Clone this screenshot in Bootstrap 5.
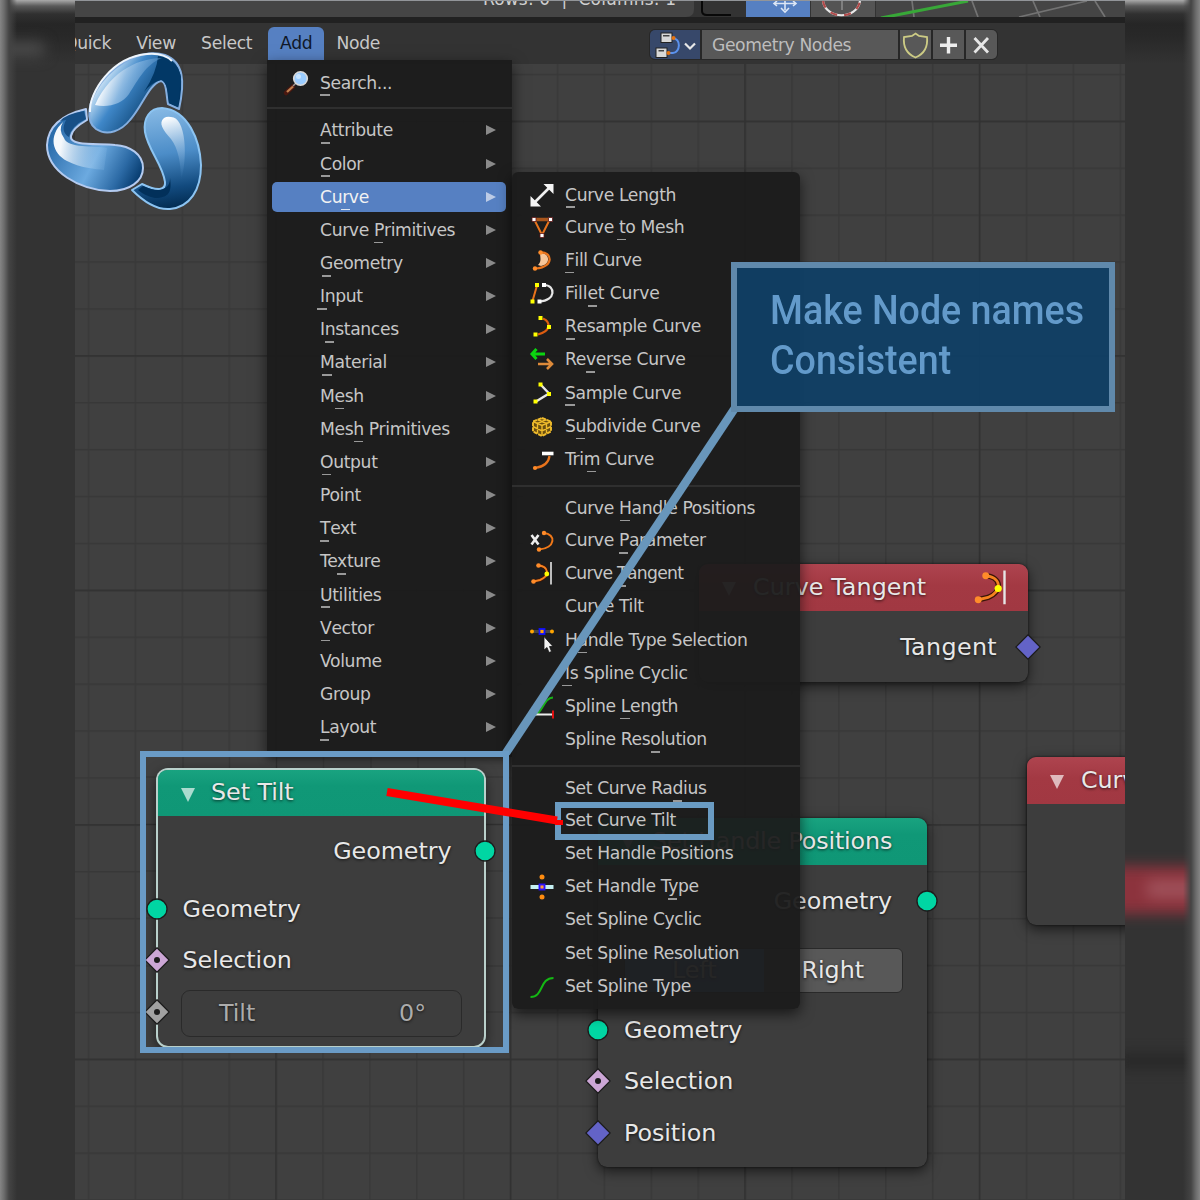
<!DOCTYPE html>
<html lang="en">
<head>
<meta charset="utf-8">
<title>Geometry Nodes</title>
<link href="https://cdn.jsdelivr.net/npm/bootstrap@5.3.0/dist/css/bootstrap.min.css" rel="stylesheet">
<style>
body{width:1200px;height:1200px;overflow:hidden;background:#333;font-family:"DejaVu Sans",sans-serif;color:#c8c8c8}
.stage{width:1200px;height:1200px}
.side{width:75px;flex:none;position:relative;overflow:hidden;background:linear-gradient(#aaa 0,#5a5a5a 6px,#303030 14px,#262626 24px,#282828 36px,#333 64px,#333 100%)}
.side .fade-l{position:absolute;inset:0;background:linear-gradient(90deg,#858585 0,#6c6c6c 4px,#444 9px,rgba(51,51,51,0) 17px)}
.side .fade-r{position:absolute;inset:0;background:linear-gradient(270deg,#858585 0,#6c6c6c 4px,#444 9px,rgba(51,51,51,0) 17px)}
.smudge{position:absolute;filter:blur(7px)}
.editor{width:1050px;height:1200px;overflow:hidden;border-top:1px solid #929599}
.topstrip{height:16px;background:#333;overflow:hidden}
.seam{height:6px;background:#212121}
.hdr{height:41px;background:#333;font-size:17.2px;letter-spacing:-.3px;padding-top:4px}
.hdr .nav{margin-left:-23px}
.hdr .nav-link{padding:0 12px;height:33px;line-height:33px;color:#c8c8c8;margin-right:1.2px}
.hdr .nav-link.active{background:#5680c2;color:#101828;border-radius:6px 6px 0 0;margin-right:0}
.blk{height:31px;border:1px solid #272727;border-radius:6px;background:#272727;gap:2px;overflow:hidden;position:absolute;left:574px;top:28px;width:349px}
.blk>div{background:#585858;display:flex;align-items:center;justify-content:center}
.canvas{height:1136px;position:relative;background-color:#404040}
.grid{position:absolute;left:0;top:0}
.mnu{position:absolute;background:rgba(27,27,27,.95);box-shadow:0 5px 14px rgba(0,0,0,.6);font-size:17.2px;letter-spacing:-.37px;color:#c6c6c6;margin:0}
.mnu li{height:33.17px;display:flex;align-items:center;line-height:20px;white-space:nowrap;list-style:none}
.mnu ul{margin:0;padding:0}
.mnu .ic{width:24px;height:24px;flex:none;margin-right:11px;overflow:visible}
.m1 li{padding:0 13px 0 17px}
.m1 li>b{margin-left:auto;width:0;height:0;margin-right:3px;border-left:10px solid #8a8a8a;border-top:5.5px solid transparent;border-bottom:5.5px solid transparent}
.m1 ul li{padding-left:53px}
.m1 li.on{background:#5680c2;color:#f2f2f2;border-radius:5px;height:30px;margin:1.6px 6px 1.57px 5px;padding:0 7px 0 48px}
.m1 li.on .k::after{background:#dfe6f2}
.m1 li.on>b{border-left-color:#bccbe6}
.m2 li{padding-left:18px}
.m2 ul li:first-child{padding-top:2px}
.mnu .rule{height:15px;padding-top:9.5px}
.mnu .rule i{display:block;height:2px;background:#2f2f2f}
.k{position:relative}
.k::after{content:"";position:absolute;left:50%;margin-left:-4.9px;width:9.2px;height:1.6px;bottom:-3.5px;background:#999}
.node{position:absolute;width:329px;background:#3d3d3d;border-radius:9px;box-shadow:0 4px 13px rgba(0,0,0,.62),0 0 2px #111;font-size:23.8px;letter-spacing:-.05px;color:#e8e8e8;text-shadow:0 1px 3px rgba(0,0,0,.7)}
.node .ttl{height:46.5px;border-radius:9px 9px 0 0;padding-left:54px;line-height:46px;white-space:nowrap;position:relative}
.node .ttl::before{content:"";position:absolute;left:23px;top:18px;border-top:14px solid rgba(255,255,255,.65);border-left:7px solid transparent;border-right:7px solid transparent}
.grn{background:linear-gradient(#19a380,#109877 35%,#0f9776)}
.rd{background:linear-gradient(#ae444f,#a33943 45%,#a13842)}
.rw{height:51.5px;line-height:51.5px;position:relative;padding:0 34px 0 26px}
.sk{position:absolute;top:50%;width:26px;height:26px;margin-top:-13.5px;left:-13px}
.sk.out{left:auto;right:-13px}
.tiltframe{position:absolute;left:140px;top:751px;width:369px;height:302px;border:6px solid #6a9bc6;background:#404040;overflow:hidden}
.node.sel{border-radius:10px;box-shadow:0 0 0 2px #b9d0cb,0 4px 14px rgba(0,0,0,.7)}
.fld{border:1.5px solid #2a2a2a;border-radius:9px;height:47px;line-height:45px;color:#acacac;padding:0 35px 0 37px;margin:0 22px 0 23px}
.twin{width:279px;height:45px;border-radius:6px;border:1px solid #2a2a2a;overflow:hidden;line-height:43px;background:#585858}
.twin>span{width:50%;text-align:center}
.callout{position:absolute;left:731px;top:262px;width:384px;height:150px;border:6px solid #6089ab;background:rgba(15,64,102,.93);color:#639aca;font:500 40px/50px Roboto,sans-serif;padding:18px 0 0 33px;white-space:nowrap}
.callout span{display:inline-block;transform:scaleX(.94);transform-origin:0 0}
.pick{position:absolute;left:555px;top:802px;width:159px;height:38px;border:6px solid #6a9bc2}
.over{position:absolute;left:0;top:0}
</style>
<script src="https://cdn.jsdelivr.net/npm/bootstrap@5.3.0/dist/js/bootstrap.bundle.min.js"></script>
</head>
<body>
<svg width="0" height="0" class="position-absolute">
<defs>
<symbol id="dot" viewBox="-13 -13 26 26"><circle r="10" fill="#00d6a3" stroke="#1c1c1c" stroke-width="1.3"/></symbol>
<symbol id="dia" viewBox="-13 -13 26 26"><path d="M0-12.2L12.2 0 0 12.2-12.2 0Z" fill="#6363c7" stroke="#1c1c1c" stroke-width="1.3"/></symbol>
<symbol id="diap" viewBox="-13 -13 26 26"><path d="M0-12.2L12.2 0 0 12.2-12.2 0Z" fill="#cca6d6" stroke="#1c1c1c" stroke-width="1.3"/><circle r="3" fill="#1c1c1c"/></symbol>
<symbol id="diag" viewBox="-13 -13 26 26"><path d="M0-12.2L12.2 0 0 12.2-12.2 0Z" fill="#a1a1a1" stroke="#1c1c1c" stroke-width="1.3"/><circle r="3" fill="#1c1c1c"/></symbol>
<symbol id="tang" viewBox="0 0 24 24"><path d="M8 4.5C19 5 20 15 10 19L3.5 20.5" fill="none" stroke="#3a1508" stroke-width="3.6"/><path d="M8 4.5C19 5 20 15 10 19L3.5 20.5" fill="none" stroke="#f58220" stroke-width="1.9"/><circle cx="8.5" cy="4.5" r="2.3" fill="#ff8c2a"/><circle cx="3.5" cy="20.5" r="2.3" fill="#ff8c2a"/><circle cx="16.8" cy="13" r="2.4" fill="#ff0"/><path d="M21 1V23.5" stroke="#e6e6e6" stroke-width="1.6"/></symbol>
</defs>
</svg>
<main class="stage d-flex position-relative">
  <div class="side">
    <div class="smudge" style="left:-8px;top:42px;width:52px;height:14px;background:#4c4c4c"></div>
    <div class="fade-l"></div>
  </div>
  <section class="editor position-relative">
    <div class="topstrip">
      <svg width="1050" height="17" class="d-block" font-family="DejaVu Sans" font-size="17">
        <path d="M0 0H619V8Q619 16 611 16H0Z" fill="#454545"/>
        <text x="408" y="4" fill="#d0d0d0" textLength="193" xml:space="preserve">Rows: 0  |  Columns: 1</text>
        <path d="M627 0V10Q627 14 632 14H656" fill="none" stroke="#080808" stroke-width="2"/>
        <path d="M671 0H735V16H671Z" fill="#5680c2"/><path d="M736 0H800V16H736Z" fill="#545454"/><path d="M801 0H1050V16H801Z" fill="#454545"/>
        <path d="M710 0V9M699 2.5H720M706 7L710 11 714 7M702 0L699 2.5 702 5M718 0L721 2.5 718 5" stroke="#dce6f5" stroke-width="1.6" fill="none"/>
        <path d="M748 0C751 19 782 19 785 0" fill="none" stroke="#e8e8e8" stroke-width="2.2"/><path d="M748 0C751 19 782 19 785 0" fill="none" stroke="#b04a4a" stroke-width="2.2" stroke-dasharray="7 7"/><path d="M767 0V9" stroke="#aaa"/>
        <path d="M837 0L839 16M897 0L903 16M958 0L965 16M1012 0L944 16M1020 0L1030 16" stroke="#737373" stroke-width="1.7"/>
        <path d="M806 17L893 0" stroke="#38a838" stroke-width="3"/>
      </svg>
    </div>
    <div class="seam"></div>
    <header class="hdr">
      <nav class="nav flex-nowrap">
        <a class="nav-link">Quick</a><a class="nav-link">View</a><a class="nav-link">Select</a><a class="nav-link active" style="margin-left:2.500px">Add</a><a class="nav-link">Node</a>
      </nav>
      <div class="blk d-flex">
        <div style="width:50px;background:#37486a">
          <svg width="50" height="30" viewBox="0 0 50 30"><path d="M22 8C32 8 30 23 23 23H17" fill="none" stroke="#5b92ee" stroke-width="2"/><rect x="11" y="3" width="11" height="9.500" fill="#d8d8d8" stroke="#222"/><path d="M13 5.700H19.500" stroke="#444" stroke-width="1.4"/><rect x="6" y="18" width="11" height="9.500" fill="#d8d8d8" stroke="#222"/><path d="M8.500 20.700H14" stroke="#444" stroke-width="1.400"/><circle cx="23.500" cy="8" r="2" fill="#e5730f"/><circle cx="18.500" cy="23" r="2" fill="#e5730f"/><path d="M35 13.500L40 18.500 45 13.500" fill="none" stroke="#e8e8e8" stroke-width="2.2"/></svg>
        </div>
        <div class="flex-grow-1 justify-content-start" style="color:#bdbdbd;padding-left:10px;padding-top:2px;letter-spacing:-.42px">Geometry Nodes</div>
        <div style="width:31px"><svg width="31" height="30"><path d="M15.500 3.500L19 6 27 7C28 17 24 24 15.500 27.500 7 24 3 17 4 7L12 6Z" fill="none" stroke="#cccb85" stroke-width="1.800"/></svg></div>
        <div style="width:31px"><svg width="31" height="30"><path d="M15.500 7V23.500M7 15.200H24" stroke="#eee" stroke-width="3.400"/></svg></div>
        <div style="width:31px"><svg width="31" height="30"><path d="M8.500 8L22 22.500M22 8L8.500 22.500" stroke="#e6e6e6" stroke-width="2.800"/></svg></div>
      </div>
    </header>
    <div class="canvas">
      <svg class="grid" width="1050" height="1136">
        <defs>
          <pattern id="gp" x="12.700" y="9.700" width="46.900" height="46.900" patternUnits="userSpaceOnUse"><path d="M.8 0V46.900M0 .8H46.900" stroke="#383838" stroke-width="1.400"/></pattern>
          <pattern id="gM" x="200.300" y="56.600" width="234.500" height="234.500" patternUnits="userSpaceOnUse"><path d="M.8 0V234.500M0 .8H234.500" stroke="#303030" stroke-width="1.300"/></pattern>
        </defs>
        <rect width="1050" height="1136" fill="url(#gp)"/><rect width="1050" height="1136" fill="url(#gM)"/>
      </svg>
      <article class="node" style="left:624px;top:500px;height:118px"><div class="ttl rd" style="letter-spacing:.07px">Curve Tangent<svg style="position:absolute;left:273px;top:5px" width="38" height="36"><use href="#tang"/></svg></div>
        <div class="rw text-end" style="margin-top:11px;padding-right:31px;letter-spacing:.35px">Tangent<svg class="sk out"><use href="#dia"/></svg></div></article>
      <article class="node" style="left:523px;top:754px;height:349px"><div class="ttl grn" style="letter-spacing:-.15px">Set Handle Positions</div>
        <div class="rw text-end" style="margin-top:11px;padding-right:35px">Geometry<svg class="sk out"><use href="#dot"/></svg></div>
        <div class="twin d-flex" style="margin:21px 0 11.500px 26px"><span style="background:#5680c2">Left</span><span>Right</span></div>
        <div class="rw">Geometry<svg class="sk"><use href="#dot"/></svg></div>
        <div class="rw">Selection<svg class="sk"><use href="#diap"/></svg></div>
        <div class="rw">Position<svg class="sk"><use href="#dia"/></svg></div></article>
      <article class="node" style="left:952px;top:693px;height:168px"><div class="ttl rd">Curve Tangent</div></article>
    </div>
  </section>
  <div class="side">
    <div class="smudge" style="left:-15px;top:866px;width:105px;height:48px;background:#8c333d"></div>
    <div class="smudge" style="left:22px;top:880px;width:70px;height:18px;background:#b06a72;opacity:.55"></div>
    <div class="smudge" style="left:-10px;top:1054px;width:100px;height:14px;background:#272727"></div>
    <div class="fade-r"></div>
  </div>

  <div class="mnu m1" style="left:267px;top:60px;width:245px;height:697px">
    <li style="height:45px"><svg class="ic" viewBox="0 0 24 24"><path d="M2 22L9 15.500" stroke="#4a1810" stroke-width="4.500" stroke-linecap="round"/><path d="M3 21L9 15.500" stroke="#c08050" stroke-width="2.200"/><path d="M9 15L12 12" stroke="#999" stroke-width="1.500"/><circle cx="16.500" cy="7.500" r="6.800" fill="#9accff" stroke="#d8d8d8" stroke-width="1.600"/><circle cx="14.500" cy="5.500" r="2.500" fill="#c8e4ff"/></svg><span style="margin-left:1px"><span class="k">S</span>earch...</span></li>
    <div style="height:8.800px;padding-top:1.500px"><i class="d-block" style="height:2px;background:#2f2f2f"></i></div>
    <ul>
      <li><span><span class="k">A</span>ttribute</span><b></b></li><li><span><span class="k">C</span>olor</span><b></b></li>
      <li class="on"><span>Cu<span class="k">r</span>ve</span><b></b></li>
      <li><span>Curve <span class="k">P</span>rimitives</span><b></b></li><li><span><span class="k">G</span>eometry</span><b></b></li>
      <li><span><span class="k">I</span>nput</span><b></b></li><li><span>I<span class="k">n</span>stances</span><b></b></li>
      <li><span><span class="k">M</span>aterial</span><b></b></li><li><span>M<span class="k">e</span>sh</span><b></b></li>
      <li><span>Mes<span class="k">h</span> Primitives</span><b></b></li><li><span><span class="k">O</span>utput</span><b></b></li>
      <li><span>Point</span><b></b></li><li><span><span class="k">T</span>ext</span><b></b></li>
      <li><span>Te<span class="k">x</span>ture</span><b></b></li><li><span><span class="k">U</span>tilities</span><b></b></li>
      <li><span><span class="k">V</span>ector</span><b></b></li><li><span>Volume</span><b></b></li>
      <li><span>Group</span><b></b></li><li><span><span class="k">L</span>ayout</span><b></b></li>
    </ul>
  </div>

  <div class="mnu m2 rounded-2" style="left:512px;top:172px;width:288px;height:837px;padding-top:5px">
    <ul>
      <li><svg class="ic"><path d="M4 20L20 4" stroke="#f0f0f0" stroke-width="2.600"/><path d="M13.500 1H23.500V11ZM.5 13V23.500H11Z" fill="#f5f5f5"/></svg><span><span class="k">C</span>urve Length</span></li>
      <li><svg class="ic"><path d="M4.500 5L12 20 19.500 5" fill="none" stroke="#e8731c" stroke-width="2"/><path d="M5 4.500H19" stroke="#a8551c" stroke-width="3.500"/><path d="M2 2.500h4v4h-4zM18.500 2.500h4v4h-4zM10 18.500h4v4h-4z" fill="#fff" stroke="#601515" stroke-width=".8"/></svg><span>Curve <span class="k">t</span>o Mesh</span></li>
      <li><svg class="ic"><path d="M10 5C19 4 22 16 11 18L8 17C12 13 10 9 10 5Z" fill="#f8c79a"/><path d="M10 4.500C22 3 25 19 6 20.500" fill="none" stroke="#e8731c" stroke-width="2.200"/><circle cx="10.500" cy="4.500" r="2.200" fill="#ff8c2a"/><circle cx="5" cy="20.500" r="2.200" fill="#ff8c2a"/></svg><span><span class="k">F</span>ill Curve</span></li>
      <li><svg class="ic"><path d="M7 4.500L2.500 20" stroke="#e8731c" stroke-width="2"/><path d="M14 4C26 4 26 20 9.500 20.500" fill="none" stroke="#e6e6e6" stroke-width="2.200"/><path d="M5 2h4v4h-4zM.5 18.500h4v4h-4z" fill="#ff0"/><path d="M12 2h4v4h-4zM7.500 18.500h4v4h-4z" fill="#fff"/></svg><span style="letter-spacing:-.15px">Fill<span class="k">e</span>t Curve</span></li>
      <li><svg class="ic"><path d="M13 4.500C21 8 21 17 8 20.500" fill="none" stroke="#dc5c10" stroke-width="2.200"/><path d="M8.500 2h4v4h-4zM17 11h4v4h-4zM3.500 18.500h4v4h-4z" fill="#ff0"/></svg><span><span class="k">R</span>esample Curve</span></li>
      <li><svg class="ic"><path d="M6.500 2L2 7 6.500 12M2 7H15" fill="none" stroke="#0bd410" stroke-width="3"/><path d="M17 12L22 17 17 22M22 17H8" fill="none" stroke="#dd8a3a" stroke-width="2.600"/></svg><span>Re<span class="k">v</span>erse Curve</span></li>
      <li><svg class="ic"><path d="M11 4L19 12.500 6 20.500" fill="none" stroke="#e6e6e6" stroke-width="2.400"/><path d="M8.500 1.500h4v4h-4zM17 11h4v4h-4zM3.500 18.500h4v4h-4z" fill="#ff0"/></svg><span><span class="k">S</span>ample Curve</span></li>
      <li><svg class="ic"><path d="M12 4L21 7.500V17.500L12 22 3 17.500V7.500Z" fill="#6a4e10" stroke="#f0bc2c" stroke-width="1.900" stroke-dasharray="4 1"/><path d="M3 7.500L12 11.500 21 7.500M12 11V22M3 12.500L12 17 21 12.500M7.500 5.500L16.500 9.500V19.500M16.500 5.500L7.500 9.500V19.500" fill="none" stroke="#f0bc2c" stroke-width="1.400"/></svg><span>S<span class="k">u</span>bdivide Curve</span></li>
      <li><svg class="ic"><path d="M12 6.500H23.500" stroke="#fff" stroke-width="3.600"/><path d="M19.500 9C18.500 17 12 20 5 21" fill="none" stroke="#e8731c" stroke-width="2.200"/><circle cx="5" cy="21" r="2.100" fill="#ff8c2a"/></svg><span>Tri<span class="k">m</span> Curve</span></li>
    </ul>
    <div class="rule"><i></i></div>
    <ul>
      <li><span class="ic"></span><span>Curve <span class="k">H</span>andle Positions</span></li>
      <li><svg class="ic"><path d="M1.500 7L8.500 16.500M8.500 7L1.500 16.500" stroke="#eee" stroke-width="2.600"/><path d="M14 5C26 6 26 20 9 21.500" fill="none" stroke="#f07818" stroke-width="2"/><circle cx="14" cy="5" r="2.200" fill="#ff8c2a"/><circle cx="9" cy="21.500" r="2.200" fill="#ff8c2a"/></svg><span>Curve <span class="k">P</span>arameter</span></li>
      <li><svg class="ic"><use href="#tang"/></svg><span style="letter-spacing:-.68px">Curve <span class="k">T</span>angent</span></li>
      <li><span class="ic"></span><span>Curve Tilt</span></li>
      <li><svg class="ic"><path d="M2 3.500H22" stroke="#444" stroke-width="3"/><circle cx="2" cy="3.500" r="2" fill="#ffa500"/><circle cx="22" cy="3.500" r="2" fill="#ffa500"/><rect x="9.500" y="1" width="5" height="5" fill="#ffa500" stroke="#1010ff" stroke-width="1.800"/><path d="M14 8.500V22L17 19.500 19 24.500 21.500 23.500 19.500 18.500H23Z" fill="#f2f2f2" stroke="#111" stroke-width=".8"/></svg><span>H<span class="k">a</span>ndle Type Selection</span></li>
      <li><span class="ic"></span><span><span class="k">I</span>s Spline Cyclic</span></li>
      <li><svg class="ic"><path d="M0 22C14 22 12 4 23 3.500" fill="none" stroke="#18b018" stroke-width="2"/><path d="M1 20.500H23" stroke="#eee" stroke-width="2"/><path d="M23 16.500V24.500" stroke="#e01010" stroke-width="2"/></svg><span>Spline <span class="k">L</span>ength</span></li>
      <li><span class="ic"></span><span>Spline Res<span class="k">o</span>lution</span></li>
    </ul>
    <div class="rule" style="height:14.500px"><i></i></div>
    <ul>
      <li style="padding-top:3px"><span class="ic"></span><span>Set Curve Ra<span class="k">d</span>ius</span></li>
      <li><span class="ic"></span><span>Set Curve Tilt</span></li>
      <li><span class="ic"></span><span>Set Handle Positions</span></li>
      <li><svg class="ic"><path d="M.5 13H23.500" stroke="#c5f0f2" stroke-width="4"/><circle cx="12" cy="3" r="2.500" fill="#ff8c10"/><circle cx="12" cy="23" r="2.500" fill="#ff8c10"/><rect x="9.500" y="10.500" width="5" height="5" fill="#ffa03c" stroke="#2a10ff" stroke-width="1.900"/></svg><span>Set Handle T<span class="k">y</span>pe</span></li>
      <li><span class="ic"></span><span>Set Spline Cyclic</span></li>
      <li><span class="ic"></span><span>Set Spline Resolution</span></li>
      <li><svg class="ic"><path d="M.5 23C14 23 9 4 23.500 4" fill="none" stroke="#14b814" stroke-width="2"/></svg><span>Set Spline Type</span></li>
    </ul>
  </div>

  <svg class="over" width="1200" height="1200"><path d="M735 408L506 753" stroke="#6896bb" stroke-width="8.500"/></svg>
  <div class="tiltframe">
    <svg class="grid" width="357" height="290">
      <path d="M0 20H357M0 114H357M0 161H357M0 209H357M0 255H357M37 0V290M83.500 0V290M177.500 0V290M225 0V290M272 0V290M319 0V290" stroke="#383838" stroke-width="1.400"/><path d="M0 67.500H357M130.500 0V290" stroke="#303030" stroke-width="1.300"/>
      <rect x="121" y="-20" width="245" height="22" fill="#1c1c1c" style="filter:blur(4px)"/>
    </svg>
    <article class="node sel" style="left:12px;top:13px;width:326px;height:276px"><div class="ttl grn" style="padding-left:53px;height:45.500px;line-height:45px">Set Tilt</div>
      <div class="rw text-end" style="margin-top:10px;padding-right:32.500px">Geometry<svg class="sk out" style="right:-14px"><use href="#dot"/></svg></div>
      <div class="rw" style="margin-top:6.500px;padding-left:24.500px">Geometry<svg class="sk" style="left:-14px"><use href="#dot"/></svg></div>
      <div class="rw" style="padding-left:24.500px">Selection<svg class="sk" style="left:-14px"><use href="#diap"/></svg></div>
      <div class="rw px-0" style="padding-top:3px"><div class="fld d-flex justify-content-between"><span>Tilt</span><span>0°</span></div><svg class="sk" style="left:-14px"><use href="#diag"/></svg></div>
    </article>
  </div>
  <div class="callout"><span>Make Node names<br>Consistent</span></div>
  <div class="pick"></div>
  <svg class="over" width="1200" height="1200">
    <defs>
      <linearGradient id="l1" gradientUnits="userSpaceOnUse" x1="100" y1="70" x2="160" y2="110"><stop offset="0" stop-color="#fff"/><stop offset=".18" stop-color="#a8cdec"/><stop offset=".42" stop-color="#3f87c8"/><stop offset="1" stop-color="#023663"/></linearGradient>
      <linearGradient id="l2" gradientUnits="userSpaceOnUse" x1="55" y1="130" x2="142" y2="175"><stop offset="0" stop-color="#2a6cab"/><stop offset=".5" stop-color="#6caae0"/><stop offset=".8" stop-color="#2c6aa5"/><stop offset="1" stop-color="#04396c"/></linearGradient>
      <linearGradient id="l3" gradientUnits="userSpaceOnUse" x1="155" y1="110" x2="170" y2="208"><stop offset="0" stop-color="#85b8e4"/><stop offset=".45" stop-color="#4c8dc8"/><stop offset=".8" stop-color="#124a7e"/><stop offset="1" stop-color="#022c52"/></linearGradient>
      <linearGradient id="h2" gradientUnits="userSpaceOnUse" x1="60" y1="150" x2="106" y2="158"><stop offset="0" stop-color="#fff" stop-opacity=".95"/><stop offset="1" stop-color="#8fc0ea" stop-opacity=".2"/></linearGradient>
      <linearGradient id="h3" gradientUnits="userSpaceOnUse" x1="165" y1="118" x2="182" y2="180"><stop offset="0" stop-color="#fff"/><stop offset=".3" stop-color="#c0d8ee" stop-opacity=".8"/><stop offset="1" stop-color="#4c8dc8" stop-opacity="0"/></linearGradient>
      <linearGradient id="h1" gradientUnits="userSpaceOnUse" x1="106" y1="72" x2="152" y2="90"><stop offset="0" stop-color="#fff"/><stop offset=".4" stop-color="#9cc3e6" stop-opacity=".8"/><stop offset="1" stop-color="#5f9ad0" stop-opacity=".35"/></linearGradient>
    </defs>
    <path d="M387 792L557 820.500" stroke="#f00" stroke-width="8"/><path d="M555 803V839" stroke="#6a9bc2" stroke-width="0"/><path d="M555 820H563V825H555Z" fill="#f00"/>
    <g stroke-linejoin="round">
      <path d="M179 109C185 82 184 62 165 55C147 49 119 59 101 83C88 101 85 121 96 129C108 137 122 130 130 120C142 107 149 84 161 81C167 82 166 95 168 104Z" fill="url(#l1)" stroke="#85afe0" stroke-width="2"/>
      <path d="M158 56Q177 58 181 77L178 107 169 103Q168 82 161 80 152 82 144 92 157 72 158 56Z" fill="#023866"/>
      <path d="M162 58C142 58 112 68 95 105C108 108 122 104 129 94C138 80 146 64 162 58Z" fill="url(#h1)"/>
      <path d="M90 112C89 92 112 57 147 54C158 53 167 56 172 61" fill="none" stroke="#eef5fc" stroke-width="2"/>
      <path d="M86 109C65 114 48 124 47 145C47 172 80 190 110 191C130 191 143 181 143 168C143 154 130 146 115 145C100 143 69 147 71 136C72 130 80 124 87 120Z" fill="url(#l2)" stroke="#b4cbf0" stroke-width="2"/>
      <path d="M60 121Q66 114 84 111L86 119Q71 126 69 137 60 132 66 120Z" fill="#174f86"/>
      <path d="M63 122C48 136 52 153 67 161C80 168 96 169 104 170L107 148C94 145 68 149 64 138Q58 130 63 122Z" fill="url(#h2)"/>
      <path d="M162 108C150 108 143 118 145 132C148 150 163 165 165 182C166 190 158 192 142 184L132 190C145 203 158 210 170 209C190 207 201 190 201 165C200 140 188 110 162 108Z" fill="url(#l3)" stroke="#8cc4f2" stroke-width="2"/>
      <path d="M164 118C158 123 163 130 171 139C178 148 181 163 181 180C188 158 186 117 171 117Q167 116 164 118Z" fill="url(#h3)"/>
      <path d="M143 186Q157 192 163 189C170 187 170 180 170 178C172 192 169 198 155 198Q145 196 138 190Z" fill="#02305a"/>
    </g>
  </svg>
</main>
</body>
</html>
